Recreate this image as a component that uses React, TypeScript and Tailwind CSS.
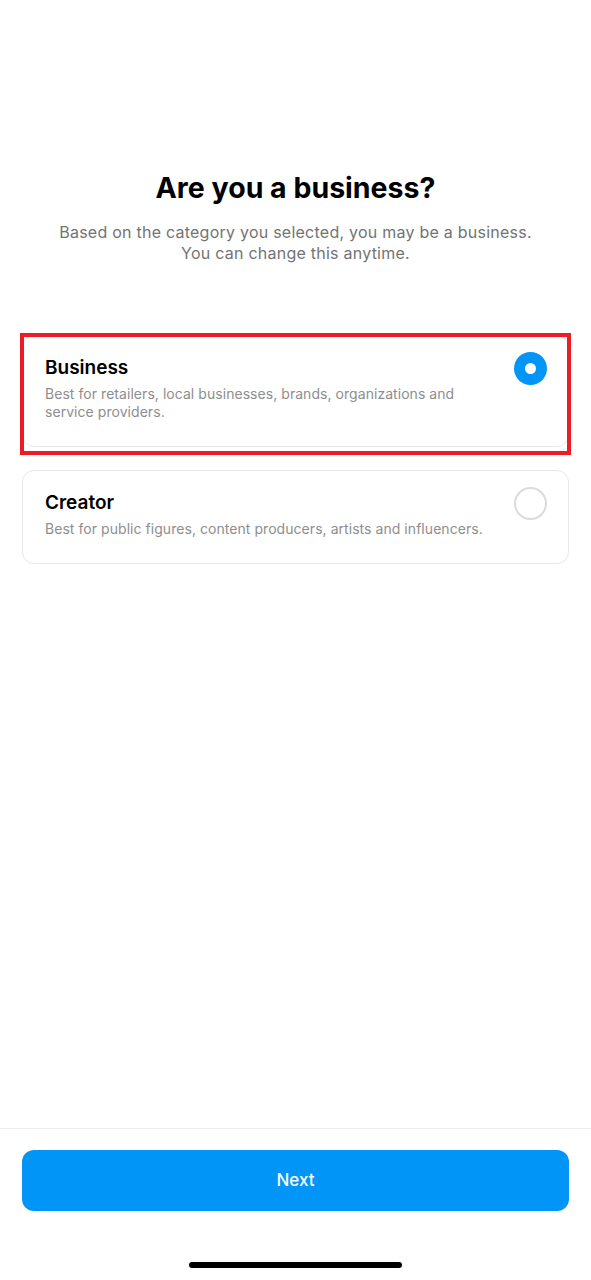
import React, { useState } from "react";

type Option = {
  id: string;
  title: string;
  description: string;
};

const options: Option[] = [
  {
    id: "business",
    title: "Business",
    description: "Best for retailers, local businesses, brands, organizations and service providers.",
  },
  {
    id: "creator",
    title: "Creator",
    description: "Best for public figures, content producers, artists and influencers.",
  },
];

function Radio({ checked }: { checked: boolean }) {
  if (checked) {
    return (
      <div className="w-[33px] h-[33px] shrink-0 rounded-full bg-[#0095f6] flex items-center justify-center">
        <div className="w-[11px] h-[11px] rounded-full bg-white" />
      </div>
    );
  }
  return <div className="w-[33px] h-[33px] shrink-0 rounded-full border-2 border-[#dbdbdb]" />;
}

export default function App() {
  const [selected, setSelected] = useState("business");

  return (
    <div className="w-[591px] h-[1280px] bg-white flex flex-col font-['Inter',sans-serif] text-black">
      <main className="flex-1 px-[22px] pt-[171px]">
        <h1 className="text-[28.5px] leading-[34px] font-bold text-center">
          Are you a business?
        </h1>
        <p className="mt-[17px] text-[16px] leading-[21px] tracking-[0.24px] text-[#737373] text-center">
          Based on the category you selected, you may be a business.
          <br />
          You can change this anytime.
        </p>

        <div className="mt-[71px] flex flex-col gap-[23px]">
          {options.map((opt) => (
            <div key={opt.id} className="relative">
              <button
                type="button"
                onClick={() => setSelected(opt.id)}
                className="w-full text-left flex items-start gap-[20px] pl-[22px] pr-[21px] pt-[16px] pb-[25px] rounded-[12px] border border-[#e8e8e8] bg-white"
              >
                <div className="flex-1 pt-[4px]">
                  <div className="text-[19px] leading-[24px] font-semibold">{opt.title}</div>
                  <div className="mt-[5px] text-[14px] leading-[18px] tracking-[0.05px] text-[#8e8e8e]">
                    {opt.description}
                  </div>
                </div>
                <Radio checked={selected === opt.id} />
              </button>
              {opt.id === "business" && (
                <div className="absolute -left-[2px] -right-[2px] -top-[2px] -bottom-[8px] border-[4px] border-[#ed1c24] pointer-events-none" />
              )}
            </div>
          ))}
        </div>
      </main>

      <footer className="border-t border-[#efefef] flex flex-col items-center">
        <div className="w-full px-[22px] pt-[21px]">
          <button
            type="button"
            className="w-full h-[61px] rounded-[12px] bg-[#0095f6] text-white text-[17px] font-medium"
          >
            Next
          </button>
        </div>
        <div className="mt-[51px] mb-[12px] w-[213px] h-[6px] rounded-full bg-black" />
      </footer>
    </div>
  );
}
